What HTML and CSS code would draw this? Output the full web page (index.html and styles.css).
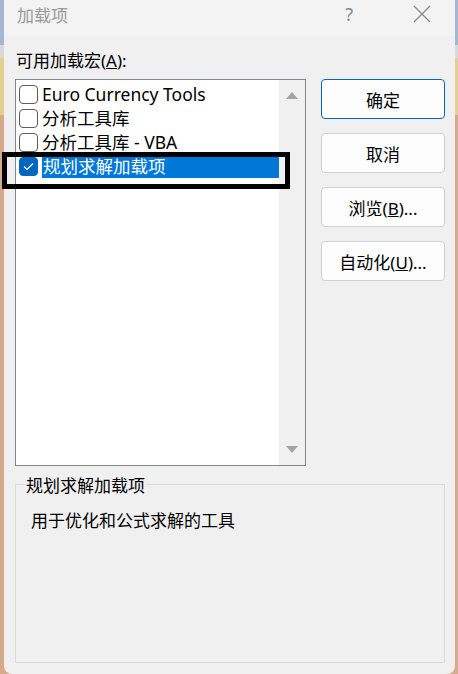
FILE: index.html
```html
<!DOCTYPE html>
<html lang="zh-CN">
<head>
<meta charset="UTF-8">
<title>加载项</title>
<link rel="stylesheet" href="styles.css">
</head>
<body>
<div class="dialog">
  <div class="titlebar">
    <span class="title">加载项</span>
    <span class="help">?</span>
    <span class="close">
      <svg width="18" height="18" viewBox="0 0 18 18"><path d="M1 1L17 17M17 1L1 17" stroke="#8a8a8a" stroke-width="1.3" fill="none"/></svg>
    </span>
  </div>
  <div class="content">
    <div class="label">可用加载宏(<u>A</u>):</div>
    <div class="main">
      <div class="listbox">
        <div class="items">
          <div class="item"><span class="check"></span><span class="name">Euro Currency Tools</span></div>
          <div class="item"><span class="check"></span><span class="name">分析工具库</span></div>
          <div class="item"><span class="check"></span><span class="name">分析工具库 - VBA</span></div>
          <div class="item selected">
            <span class="check on">
              <svg width="11" height="9" viewBox="0 0 11 9"><path d="M1 4.5L4 7.5L10 1.5" stroke="#fff" stroke-width="1.2" fill="none"/></svg>
            </span>
            <span class="name">规划求解加载项</span>
          </div>
          <div class="mark"></div>
        </div>
        <div class="scrollbar">
          <span class="arrow up"></span>
          <span class="arrow down"></span>
        </div>
      </div>
      <div class="buttons">
        <button class="default">确定</button>
        <button>取消</button>
        <button>浏览(<u>B</u>)...</button>
        <button>自动化(<u>U</u>)...</button>
      </div>
    </div>
    <fieldset class="group">
      <legend>规划求解加载项</legend>
      <div class="desc">用于优化和公式求解的工具</div>
    </fieldset>
  </div>
</div>
</body>
</html>
```

FILE: styles.css
```css
body { margin: 0; height: 674px; overflow: hidden; font-family: "Noto Sans", "Noto Sans CJK SC", sans-serif; font-size: 17px; color: #000;
  background: linear-gradient(#a6b6d2 0, #a6b6d2 45px, #d9d9d9 45px, #d9d9d9 58px, #e3cf8e 58px, #e3cf8e 115px, #d6aa8d 115px); }
.dialog { margin: 0 3px 0 4px; height: 674px; background: #f0f0f0; border-radius: 0 0 8px 8px; display: flex; flex-direction: column; }
.titlebar { height: 36px; background: #f3f3f3; display: flex; align-items: center; padding-left: 13px; }
.title { color: #9a9a9a; font-size: 17px; flex: 1; margin-top: -8px; }
.help { color: #8a8a8a; font-size: 18px; margin-right: 60px; margin-top: -8px; }
.close { margin-right: 24px; margin-top: -8px; display: flex; }
.content { padding: 0 10px 0 11px; }
.label { height: 43px; line-height: 50px; padding-left: 1px; }
.main { display: flex; justify-content: space-between; }
.listbox { width: 289px; height: 385px; border: 1px solid #828790; background: #fff; display: flex; font-size: 17.5px; }
.items { flex: 1; position: relative; padding-top: 2px; }
.item { height: 24px; display: flex; align-items: center; padding-left: 3px; }
.check { border: 1px solid #5c5c5c; border-radius: 4px; box-sizing: border-box; width: 19px; height: 19px; margin-right: 4px; display: flex; align-items: center; justify-content: center; background: #fff; }
.check.on { background: #0067c0; border-color: #0067c0; }
.name { line-height: 24px; white-space: nowrap; }
.selected .name { background: #0078d7; color: #fff; flex: 1; padding-left: 1px; }
.mark { position: absolute; left: -14px; top: 72px; width: 278px; height: 27px; border: 5px solid #000; }
.scrollbar { width: 26px; background: #f0f0f0; display: flex; flex-direction: column; justify-content: space-between; align-items: center; padding: 12px 0; }
.arrow { width: 0; height: 0; border-left: 6px solid transparent; border-right: 6px solid transparent; }
.arrow.up { border-bottom: 7px solid #a3a3a3; }
.arrow.down { border-top: 7px solid #a3a3a3; }
.buttons { width: 124px; display: flex; flex-direction: column; gap: 14px; }
button { height: 40px; font: inherit; background: #fdfdfd; border: 1px solid #d0d0d0; border-radius: 4px; color: #000; }
button.default { border-color: #0067c0; }
.group { margin: 6px 0 0 0; height: 179px; border: 1px solid #dadada; padding: 0 15px 10px; }
.group legend { padding: 0 1px; margin-left: -6px; }
.desc { padding-top: 10px; }
```
